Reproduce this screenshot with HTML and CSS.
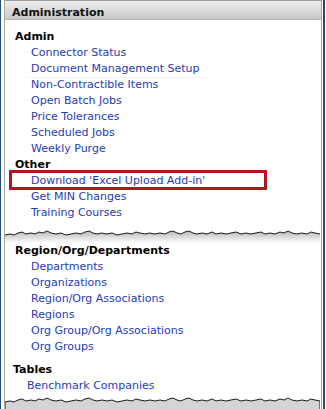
FILE: index.html
```html
<!DOCTYPE html>
<html lang="en">
<head>
    <meta charset="UTF-8">
    <meta name="viewport" content="width=device-width, initial-scale=1.0">
    <title>Administration</title>
    <link rel="stylesheet" href="styles.css">
</head>
<body>
    <!-- cadre du menu d'administration -->
    <div class="frame">
        <div class="panel">
            <div class="panel-head">Administration</div>

            <div class="section">
                <h3 class="group">Admin</h3>
                <ul class="links">
                    <li><a href="#">Connector Status</a></li>
                    <li class="rule"><a href="#">Document Management Setup</a></li>
                    <li><a href="#">Non-Contractible Items</a></li>
                    <li><a href="#">Open Batch Jobs</a></li>
                    <li><a href="#">Price Tolerances</a></li>
                    <li><a href="#">Scheduled Jobs</a></li>
                    <li><a href="#">Weekly Purge</a></li>
                </ul>
                <h3 class="group">Other</h3>
                <ul class="links">
                    <li class="marked"><a href="#">Download 'Excel Upload Add-in'</a></li>
                    <li><a href="#">Get MIN Changes</a></li>
                    <li><a href="#">Training Courses</a></li>
                </ul>
            </div>

            <!-- torn edge -->
            <svg class="tear" width="315" height="14" viewBox="0 0 315 14">
                <defs>
                    <linearGradient id="shade" x1="0" y1="0" x2="0" y2="1">
                        <stop offset="0" stop-color="#b8b8b8"/>
                        <stop offset="1" stop-color="#ffffff"/>
                    </linearGradient>
                </defs>
                <path fill="url(#shade)" d="M0 6 L5 5 L9 6 L13 4 L17 3 L21 5 L26 4 L30 5 L34 3 L38 4 L42 2 L46 4 L51 5 L56 4 L61 6 L66 5 L71 4 L76 5 L80 3 L84 2 L88 4 L92 5 L97 4 L102 5 L107 4 L112 6 L117 5 L122 4 L127 5 L131 3 L135 4 L140 5 L145 4 L150 5 L155 4 L160 5 L164 3 L168 2 L172 4 L176 5 L180 3 L184 2 L188 4 L192 5 L197 4 L202 5 L207 3 L211 5 L216 4 L221 5 L226 4 L231 3 L236 5 L241 4 L246 5 L251 4 L256 3 L260 5 L265 4 L270 5 L275 3 L279 4 L283 2 L287 4 L292 5 L297 4 L302 5 L306 3 L310 4 L315 5 L315 14 L0 14 Z"/>
                <path fill="none" stroke="#1a1a1a" stroke-width="1" d="M0 6 L5 5 L9 6 L13 4 L17 3 L21 5 L26 4 L30 5 L34 3 L38 4 L42 2 L46 4 L51 5 L56 4 L61 6 L66 5 L71 4 L76 5 L80 3 L84 2 L88 4 L92 5 L97 4 L102 5 L107 4 L112 6 L117 5 L122 4 L127 5 L131 3 L135 4 L140 5 L145 4 L150 5 L155 4 L160 5 L164 3 L168 2 L172 4 L176 5 L180 3 L184 2 L188 4 L192 5 L197 4 L202 5 L207 3 L211 5 L216 4 L221 5 L226 4 L231 3 L236 5 L241 4 L246 5 L251 4 L256 3 L260 5 L265 4 L270 5 L275 3 L279 4 L283 2 L287 4 L292 5 L297 4 L302 5 L306 3 L310 4 L315 5"/>
            </svg>

            <div class="section section-next">
                <h3 class="group">Region/Org/Departments</h3>
                <ul class="links">
                    <li><a href="#">Departments</a></li>
                    <li><a href="#">Organizations</a></li>
                    <li><a href="#">Region/Org Associations</a></li>
                    <li><a href="#">Regions</a></li>
                    <li><a href="#">Org Group/Org Associations</a></li>
                    <li><a href="#">Org Groups</a></li>
                </ul>
                <div class="tight">
                    <h3 class="group">Tables</h3>
                    <ul class="links">
                        <li><a href="#">Benchmark Companies</a></li>
                    </ul>
                </div>
            </div>

            <!-- torn edge, bottom -->
            <svg class="tear tear-end" width="315" height="16" viewBox="0 0 315 16">
                <path fill="#d4d4d4" stroke="#1a1a1a" stroke-width="1" d="M0 6 L5 5 L9 6 L13 4 L17 3 L21 5 L26 4 L30 5 L34 3 L38 4 L42 2 L46 4 L51 5 L56 4 L61 6 L66 5 L71 4 L76 5 L80 3 L84 2 L88 4 L92 5 L97 4 L102 5 L107 4 L112 6 L117 5 L122 4 L127 5 L131 3 L135 4 L140 5 L145 4 L150 5 L155 4 L160 5 L164 3 L168 2 L172 4 L176 5 L180 3 L184 2 L188 4 L192 5 L197 4 L202 5 L207 3 L211 5 L216 4 L221 5 L226 4 L231 3 L236 5 L241 4 L246 5 L251 4 L256 3 L260 5 L265 4 L270 5 L275 3 L279 4 L283 2 L287 4 L292 5 L297 4 L302 5 L306 3 L310 4 L315 5 L315 17 L0 17 Z"/>
            </svg>
        </div>
    </div>
</body>
</html>
```

FILE: styles.css
```css
/* page */
body {
    margin: 0;
    background-color: white;
    font-family: "DejaVu Sans", Verdana, sans-serif;
    font-size: 11px;
}

/* cadre bleu autour du panneau */
.frame {
    width: 318px;
    padding: 0 1px 0 3px;
    border-left: 1px solid #234a7e;
    border-right: 2px solid #234a7e;
    height: 409px;
    overflow: hidden;
}

.panel {
    border-left: 1px solid #a8a8a8;
    border-right: 1px solid #a8a8a8;
    border-top: 1px solid #9a9a9a;
    background-color: white;
}

/* header bar */
.panel-head {
    height: 18px;
    line-height: 23px;
    overflow: hidden;
    padding-left: 7px;
    font-weight: bold;
    color: #111;
    background: linear-gradient(#eeeeee, #c9c9c9);
    border-bottom: 1px solid #b4b4b4;
}

/* sections */
.section {
    padding-top: 9px;
}
.section-next {
    padding-top: 0;
}

.group {
    margin: 0;
    padding-left: 10px;
    font-size: 11px;
    line-height: 16px;
    font-weight: bold;
    color: black;
}

.links {
    list-style: none;
    margin: 0;
    padding: 0 0 0 26px;
}
.links li {
    line-height: 16px;
    height: 16px;
}
.links a {
    color: #1f3cb6;
    text-decoration: none;
}

/* faint rule under one row */
.links li.rule {
    position: relative;
}
.links li.rule::after {
    content: '';
    position: absolute;
    left: -4px;
    bottom: -1px;
    width: 183px;
    border-bottom: 1px solid #f3f3f3;
}

/* the highlighted link */
.links li.marked {
    position: relative;
}
.links li.marked::after {
    content: '';
    position: absolute;
    left: -22px;
    top: -3px;
    width: 252px;
    height: 14px;
    border: 3px solid #b3121e;
}

/* last block is pasted a bit to the left */
.tight {
    margin-top: 7px;
    margin-left: -2px;
}
.tight .links {
    padding-left: 24px;
}

/* torn edges */
.tear {
    display: block;
    margin-top: 8px;
}
.tear-end {
    margin-top: 2px;
}
```
